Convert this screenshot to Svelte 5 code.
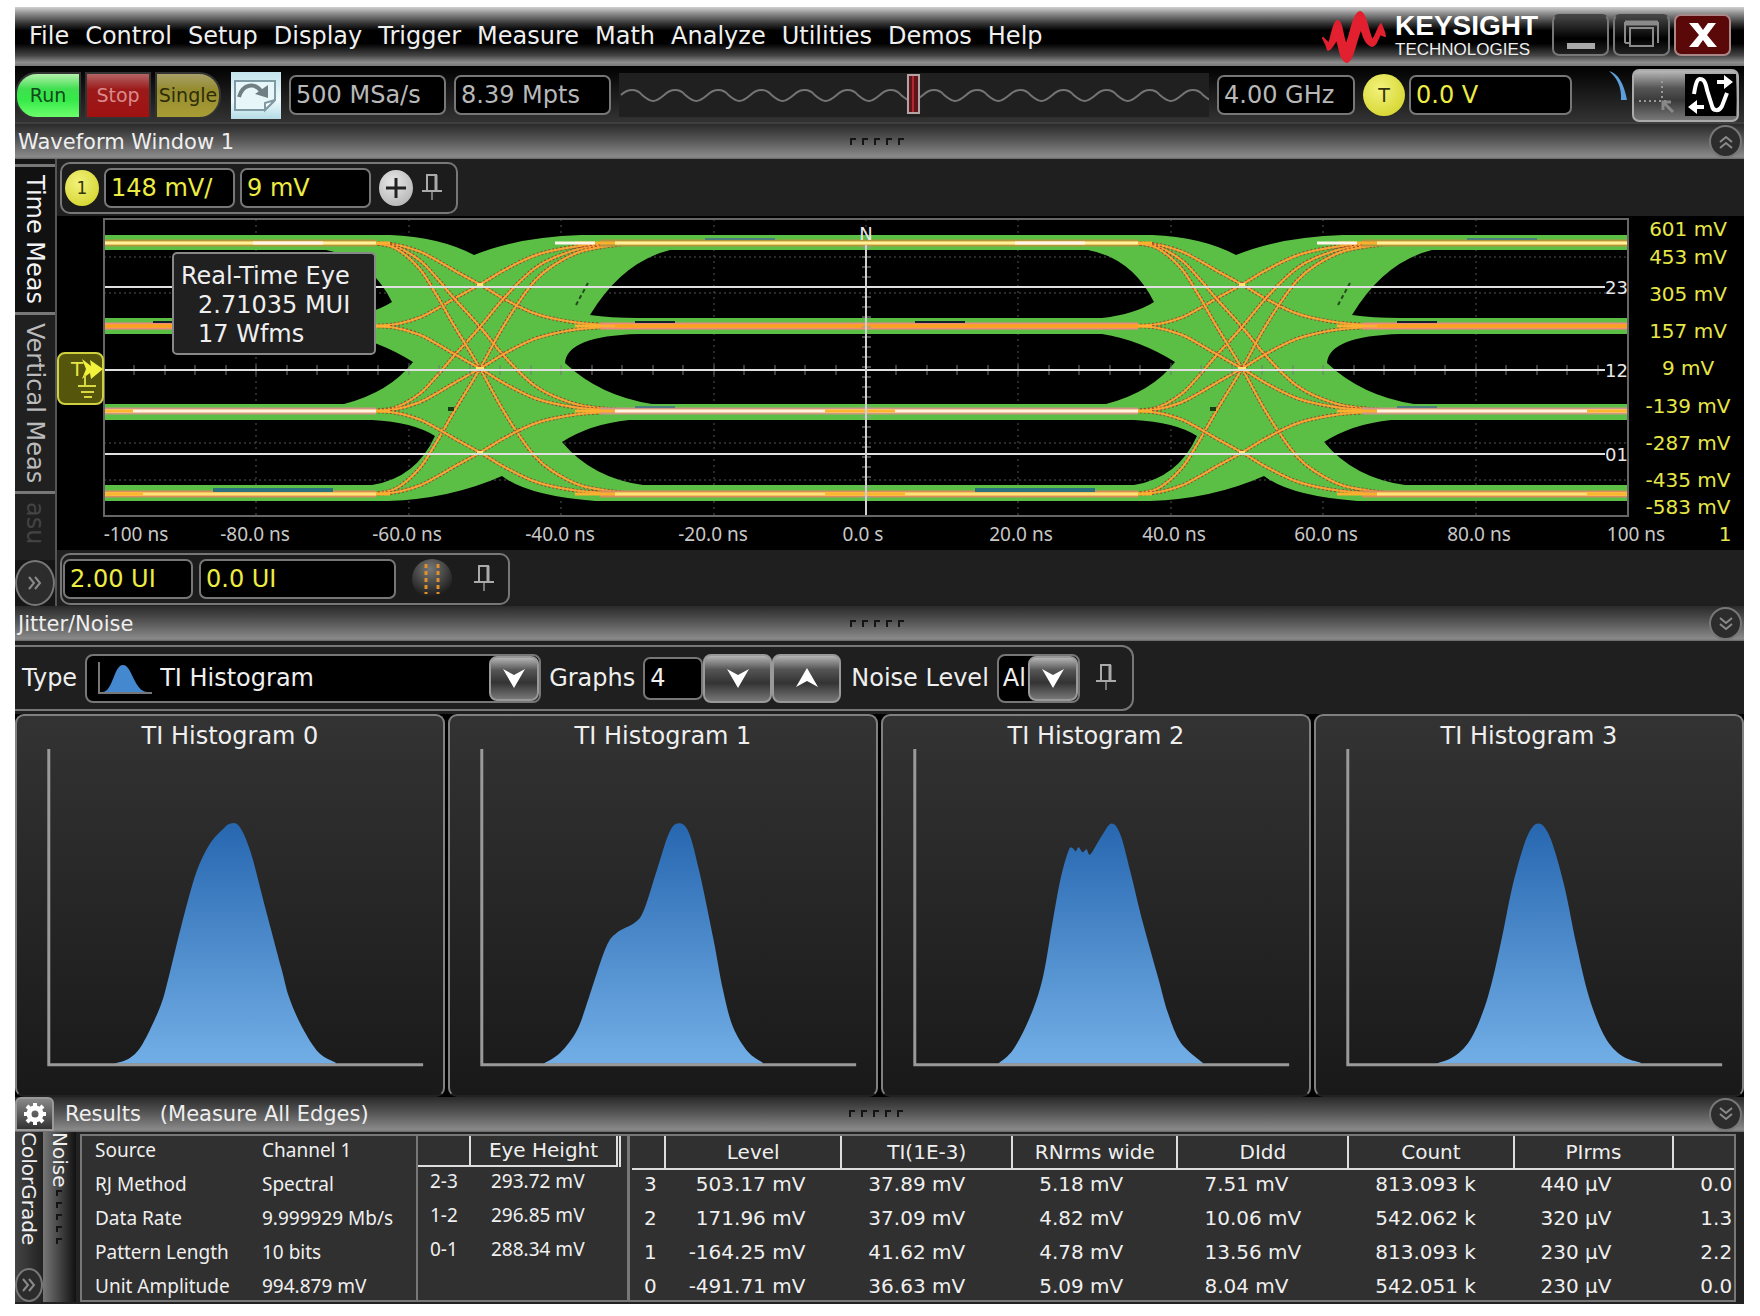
<script lang="ts">
	type Point = [number, number];

	const menus = [
		'File',
		'Control',
		'Setup',
		'Display',
		'Trigger',
		'Measure',
		'Math',
		'Analyze',
		'Utilities',
		'Demos',
		'Help'
	];

	let sampleRate = $state('500 MSa/s');
	let memoryDepth = $state('8.39 Mpts');
	let bandwidth = $state('4.00 GHz');
	let triggerLevel = $state('0.0 V');
	let scale = $state('148 mV/');
	let offset = $state('9 mV');
	let timeScale = $state('2.00 UI');
	let timePosition = $state('0.0 UI');
	let graphType = $state('TI Histogram');
	let graphs = $state('4');
	let noiseLevel = $state('All');

	// eye diagram
	const plotWidth = 1524;
	const plotHeight = 297;
	const period = 762;
	const crossings = [376 - period, 376, 376 + period, 376 + 2 * period];
	const levels = [24, 107, 192, 275];
	// level changes that occur in the pattern, as indexes into levels
	const steps = [
		[0, 1],
		[0, 2],
		[0, 3],
		[1, 2],
		[2, 3]
	];
	const thresholds = [
		{ y: 68, label: '23' },
		{ y: 151, label: '12' },
		{ y: 235, label: '01' }
	];
	const voltages = [
		{ y: 17, label: '601 mV' },
		{ y: 45, label: '453 mV' },
		{ y: 82, label: '305 mV' },
		{ y: 119, label: '157 mV' },
		{ y: 156, label: '9 mV' },
		{ y: 194, label: '-139 mV' },
		{ y: 231, label: '-287 mV' },
		{ y: 268, label: '-435 mV' },
		{ y: 295, label: '-583 mV' }
	];
	const times = [
		{ x: 32, label: '-100 ns' },
		{ x: 151, label: '-80.0 ns' },
		{ x: 303, label: '-60.0 ns' },
		{ x: 456, label: '-40.0 ns' },
		{ x: 609, label: '-20.0 ns' },
		{ x: 759, label: '0.0 s' },
		{ x: 917, label: '20.0 ns' },
		{ x: 1070, label: '40.0 ns' },
		{ x: 1222, label: '60.0 ns' },
		{ x: 1375, label: '80.0 ns' },
		{ x: 1532, label: '100 ns' }
	];
	const gridX = Array.from({ length: 9 }, (_, i) => Math.round(((i + 1) * plotWidth) / 10));
	const gridY = [38, 74, 112, 186, 224, 261];
	const ticksX = Array.from({ length: 49 }, (_, i) => Math.round(((i + 1) * plotWidth) / 50));
	const ticksY = Array.from({ length: 26 }, (_, i) => 28 + i * 10);

	// step response: time from the crossing, share of the step reached
	const response: Point[] = [
		[-110, 0],
		[-85, 0.02],
		[-61, 0.1],
		[-43, 0.21],
		[-25, 0.335],
		[0, 0.5],
		[20, 0.645],
		[38, 0.76],
		[55, 0.85],
		[73, 0.91],
		[100, 0.965],
		[133, 0.99],
		[160, 1]
	];

	function smooth(points: Point[]): string {
		let d = `M${points[0][0]} ${points[0][1]}`;
		for (let i = 0; i < points.length - 1; i++) {
			const a = points[i - 1] ?? points[i];
			const b = points[i];
			const c = points[i + 1];
			const e = points[i + 2] ?? c;
			const c1 = [b[0] + (c[0] - a[0]) / 6, b[1] + (c[1] - a[1]) / 6];
			const c2 = [c[0] - (e[0] - b[0]) / 6, c[1] - (e[1] - b[1]) / 6];
			d += `C${c1.map((n) => n.toFixed(1)).join(' ')} ${c2.map((n) => n.toFixed(1)).join(' ')} ${c[0]} ${c[1]}`;
		}
		return d;
	}

	function transition(cx: number, from: number, to: number): string {
		return smooth(response.map(([t, s]): Point => [cx + t, from + (to - from) * s]));
	}

	const transitions = crossings.flatMap((cx) =>
		steps.flatMap(([a, b]) => [
			transition(cx, levels[a], levels[b]),
			transition(cx, levels[b], levels[a])
		])
	);

	// the green density area is a block with the eye openings cut out
	const openings = [-period, 0, period].map(
		(dx) =>
			`M${486 + dx} 96q32 -53 80 -65h418q44 8 66 52q-19 12 -52 16h-464q-28 0 -48 -3z` +
			`M${461 + dx} 144q2 -27 73 -29h464q38 6 73 28q-23 30 -69 42h-454q-52 -8 -87 -41z` +
			`M${458 + dx} 223q28 -18 67 -22h505q41 2 63 16q-19 42 -63 49h-491q-51 -7 -81 -43z` +
			`M${1048 + dx} 16q50 2 84 20q44 -18 107 -20z` +
			`M${1046 + dx} 282q62 -2 114 -25q26 20 93 25z`
	);
	const density = `M0 16H${plotWidth}V282H0Z` + openings.join('');

	const runs = crossings.map((cx) => ({ start: cx + 135, end: cx + period - 104 }));
	const hot = [
		{ edge: '#b0963c', core: '#fff29a' },
		{ edge: '#f0887c', core: '#fba21c' },
		{ edge: '#d0948a', core: '#fff4e2' },
		{ edge: '#d98c5c', core: '#ffe27a' }
	];

	const histograms: { title: string; points: Point[] }[] = [
		{
			title: 'TI Histogram 0',
			points: [
				[66, 0], [82, 6], [95, 21], [112, 57], [120, 84], [133, 137], [148, 191], [162, 221], [175, 236],
				[183, 242], [192, 239], [203, 214], [217, 161], [234, 97], [242, 67], [255, 37], [272, 11], [289, 1]
			]
		},
		{
			title: 'TI Histogram 1',
			points: [
				[62, 0], [79, 11], [96, 34], [108, 67], [125, 117], [136, 132], [154, 142], [163, 154], [176, 194],
				[188, 231], [197, 242], [208, 234], [219, 194], [233, 127], [243, 74], [253, 37], [268, 12], [283, 1]
			]
		},
		{
			title: 'TI Histogram 2',
			points: [
				[84, 0], [99, 14], [116, 47], [129, 87], [139, 144], [147, 187], [155, 215], [159, 217], [162, 214],
				[165, 218], [169, 213], [173, 216], [177, 211], [188, 229], [198, 242], [207, 231], [217, 194],
				[230, 141], [245, 87], [255, 51], [268, 21], [290, 1]
			]
		},
		{
			title: 'TI Histogram 3',
			points: [
				[89, 0], [108, 8], [125, 27], [141, 67], [154, 121], [165, 175], [177, 219], [185, 237], [192, 242],
				[199, 237], [207, 219], [219, 175], [230, 121], [243, 67], [259, 27], [276, 8], [295, 1]
			]
		}
	];

	function histogramPath(points: Point[]): string {
		return smooth(points.map(([x, y]): Point => [x + 32, 318 - y])) + 'V318Z';
	}

	const info = [
		['Source', 'Channel 1'],
		['RJ Method', 'Spectral'],
		['Data Rate', '9.999929 Mb/s'],
		['Pattern Length', '10 bits'],
		['Unit Amplitude', '994.879 mV']
	];
	const eyeHeights = [
		['2-3', '293.72 mV'],
		['1-2', '296.85 mV'],
		['0-1', '288.34 mV']
	];
	const columns = ['', 'Level', 'TI(1E-3)', 'RNrms wide', 'DIdd', 'Count', 'PIrms', ''];
	const rows = [
		['3', '503.17 mV', '37.89 mV', '5.18 mV', '7.51 mV', '813.093 k', '440 µV', '0.0'],
		['2', '171.96 mV', '37.09 mV', '4.82 mV', '10.06 mV', '542.062 k', '320 µV', '1.3'],
		['1', '-164.25 mV', '41.62 mV', '4.78 mV', '13.56 mV', '813.093 k', '230 µV', '2.2'],
		['0', '-491.71 mV', '36.63 mV', '5.09 mV', '8.04 mV', '542.051 k', '230 µV', '0.0']
	];

	const sine = 'M2 22' + 'q5 -5 11 -5t10 5q7 6 11 6t11 -6'.repeat(14);
</script>

{#snippet grip()}
	<svg class="grip" width="60" height="8" viewBox="0 0 60 8" aria-hidden="true">
		{#each [0, 12, 24, 36, 48] as x}
			<path d="M{x + 1} 7V1H{x + 6}" fill="none" stroke="#141414" stroke-width="2" />
		{/each}
	</svg>
{/snippet}

{#snippet pin()}
	<button class="plain" aria-label="Pin">
		<svg width="20" height="30" viewBox="0 0 20 30" fill="none" stroke="#aaa" stroke-width="2">
			<path d="M5 17V2H14V17M0 18H20" />
			<path d="M14 2V17" stroke-width="3" />
			<path d="M10 19V27" stroke="#777" />
		</svg>
	</button>
{/snippet}

{#snippet chevrons(direction: string)}
	<button class="round" aria-label="{direction} panel">
		<svg width="16" height="16" viewBox="0 0 16 16" fill="none" stroke="#8a8a8a" stroke-width="2">
			{#if direction === 'Collapse'}
				<path d="M2 8L8 3L14 8M2 14L8 9L14 14" />
			{:else if direction === 'Expand'}
				<path d="M2 2L8 7L14 2M2 8L8 13L14 8" />
			{:else}
				<path d="M2 2L7 8L2 14M8 2L13 8L8 14" />
			{/if}
		</svg>
	</button>
{/snippet}

{#snippet arrow(up: boolean)}
	<svg width="24" height="22" viewBox="0 0 24 22" aria-hidden="true">
		<path d={up ? 'M12 1L23 20L12 14L1 20Z' : 'M12 21L1 2L12 8L23 2Z'} fill="#fff" />
	</svg>
{/snippet}

<main>
	<header class="menubar">
		<nav>
			{#each menus as menu}
				<button class="plain">{menu}</button>
			{/each}
		</nav>
		<div class="brand">
			<svg width="64" height="54" viewBox="0 0 64 54" aria-hidden="true">
				<path
					d="M1 29L7 35C10 26 11 15 15 12C20 11 20 27 24 36C28 30 31 4 38 3C44 4 46 24 50 31C54 29 55 20 59 15L62 23L63 27L58 25C55 32 53 37 50 37C44 35 42 29 39 19C34 30 31 51 25 53C18 51 18 39 15 31C13 31 10 40 6 41L4 35Z"
					fill="#e3202f"
					stroke="#e3202f"
					stroke-width="2"
					stroke-linejoin="round"
				/>
			</svg>
			<div>
				<strong>KEYSIGHT</strong>
				<span>TECHNOLOGIES</span>
			</div>
		</div>
		<div class="window-buttons">
			<button aria-label="Minimize">
				<svg width="34" height="34" viewBox="0 0 34 34"><path d="M3 25H31V31H3Z" fill="#aaa" /></svg>
			</button>
			<button aria-label="Restore">
				<svg width="36" height="34" viewBox="0 0 36 34" fill="none" stroke="#8a8a8a">
					<path d="M1 25V5H34V25M1 25H6" stroke-width="2" />
					<path d="M1 5H34" stroke-width="5" />
					<path d="M6 10H29V28H6Z" stroke-width="2" />
				</svg>
			</button>
			<button class="close" aria-label="Close">
				<svg width="30" height="30" viewBox="0 0 30 30">
					<path d="M1 3H10L15 10L20 3H28L19 15L29 27H20L15 20L10 27H1L11 15Z" fill="#fff" />
				</svg>
			</button>
		</div>
	</header>

	<div class="toolbar">
		<div class="acquire">
			<button class="run">Run</button>
			<button class="stop">Stop</button>
			<button class="single">Single</button>
		</div>
		<button class="auto" aria-label="Clear display">
			<svg width="50" height="46" viewBox="0 0 50 46">
				<path d="M4 9H44V28L34 38H4Z" fill="#e6f6f9" stroke="#7f9aa2" stroke-width="2" />
				<path d="M44 28L34 38V31Z" fill="#fff" stroke="#7f9aa2" stroke-width="2" />
				<path d="M8 25C12 11 24 11 30 19" fill="none" stroke="#6f7f84" stroke-width="4" />
				<path d="M24 22L37 26L37 13Z" fill="#6f7f84" />
			</svg>
		</button>
		<input class="field grey rate" aria-label="Sample rate" bind:value={sampleRate} />
		<input class="field grey rate" aria-label="Memory depth" bind:value={memoryDepth} />
		<div class="overview">
			<svg viewBox="0 0 588 44" preserveAspectRatio="none">
				<path d={sine} fill="none" stroke="#747474" stroke-width="2" />
				<rect x="288" y="2" width="11" height="38" fill="#5e1418" stroke="#b4a4a4" stroke-width="2" />
				<path d="M293 3V39" stroke="#b02830" stroke-width="2" />
			</svg>
		</div>
		<input class="field grey bandwidth" aria-label="Bandwidth" bind:value={bandwidth} />
		<button class="badge trigger" aria-label="Trigger source">T</button>
		<input class="field level" aria-label="Trigger level" bind:value={triggerLevel} />
		<div class="edge">
			<svg width="20" height="32" viewBox="0 0 20 32" aria-hidden="true">
				<path d="M1 1C10 3 16 14 19 30L13 30C14 16 8 7 1 1Z" fill="#5d9fd8" />
			</svg>
		</div>
		<button class="mode" aria-label="Waveform mode">
			<svg width="102" height="50" viewBox="0 0 102 50" fill="none">
				<path d="M4 31H34M27 6V30" stroke="#999" stroke-width="2" stroke-dasharray="2 3" />
				<path d="M28 32L38 42M28 40V32H36" stroke="#888" stroke-width="3" />
				<rect x="50" y="4" width="51" height="42" fill="#000" />
				<path d="M59 24C61 11 63 9 65 9S70 9 72 20L77 36C78 41 84 42 87 36L92 23" stroke="#fff" stroke-width="4" />
				<path d="M82 12H94M56 37H69" stroke="#fff" stroke-width="4" />
				<path d="M89 5L98 12L89 19ZM62 30L53 37L62 44Z" fill="#fff" />
			</svg>
		</button>
	</div>

	<div class="titlebar">
		<h2>Waveform Window 1</h2>
		{@render grip()}
		{@render chevrons('Collapse')}
	</div>

	<section class="waveform">
		<div class="side-tabs">
			<button class="tab active">Time Meas</button>
			<button class="tab">Vertical Meas</button>
			<button class="tab faded">asu</button>
			{@render chevrons('More')}
		</div>
		<div class="wave-main">
			<div class="group">
				<button class="badge" aria-label="Channel 1">1</button>
				<input class="field scale" aria-label="Vertical scale" bind:value={scale} />
				<input class="field scale" aria-label="Offset" bind:value={offset} />
				<button class="badge add" aria-label="Add channel">
					<svg width="22" height="22" viewBox="0 0 22 22"><path d="M11 1V21M1 11H21" stroke="#222" stroke-width="3" /></svg>
				</button>
				{@render pin()}
			</div>

			<div class="plot">
				<svg viewBox="-47 -3 1687 334" role="img" aria-label="Real-time eye diagram">
					<defs>
						<clipPath id="plot-area"><rect width={plotWidth} height={plotHeight} /></clipPath>
					</defs>
					<g clip-path="url(#plot-area)">
						{#each gridX as x}
							<path d="M{x} 0V{plotHeight}" stroke="#555" stroke-dasharray="2 4" />
						{/each}
						{#each gridY as y}
							<path d="M0 {y}H{plotWidth}" stroke="#555" stroke-dasharray="2 3" />
						{/each}
						<path d={density} fill="#5cbf45" fill-rule="evenodd" />
						{#each transitions as d}
							<path {d} fill="none" stroke="#a0442c" stroke-width="4" stroke-dasharray="2 2" />
							<path {d} fill="none" stroke="#fba436" stroke-width="2" />
						{/each}
						{#each runs as run}
							{#each levels as y, i}
								<path d="M{run.start - 15} {y}H{run.end}" stroke={hot[i].edge} stroke-width="7" />
								<path d="M{run.start - 40} {y}H{run.end + 14}" stroke="#fbb030" stroke-width="3" />
								<path d="M{run.start} {y}H{run.end}" stroke={hot[i].core} stroke-width="3" />
							{/each}
							<path d="M{run.start + 90} 20H{run.start + 160}M{run.start + 20} 188H{run.start + 60}" stroke="#4b7f80" stroke-width="2" />
							<path d="M{run.start + 20} 103H{run.start + 60}M{run.start + 300} 103H{run.start + 350}" stroke="#14202c" stroke-width="2" />
							<path d="M{run.start + 360} 271H{run.start + 480}" stroke="#2c7380" stroke-width="4" />
							<path d="M{run.start + 210} 192H{run.start + 280}M{run.start + 210} 275H{run.start + 290}" stroke="#fcb52c" stroke-width="3" />
							<path d="M{run.start + 400} 24H{run.start + 470}M{run.start - 60} 24H{run.start - 20}" stroke="#fff6ec" stroke-width="3" />
						{/each}
						{#each crossings as cx}
							<path d="M{cx - 3} 66h6M{cx - 4} 150h8M{cx - 3} 234h6" stroke="#ffe070" stroke-width="4" />
							<path d="M{cx + 108} 64L{cx + 96} 86" stroke="#234a1c" stroke-width="2" stroke-dasharray="4 3" />
							<path d="M{cx - 32} 190h6" stroke="#183c12" stroke-width="4" />
						{/each}
						{#each ticksX as x}
							<path d="M{x} 146V156" stroke="#777" />
						{/each}
						{#each ticksY as y}
							<path d="M758 {y}H767" stroke="#999" />
						{/each}
						{#each thresholds as line}
							<path d="M0 {line.y}H1501" stroke="#e0e0e0" stroke-width="2" />
						{/each}
						<path d="M762 26V{plotHeight}" stroke="#d0d0d0" stroke-width="2" />
					</g>
					<rect width={plotWidth} height={plotHeight} fill="none" stroke="#666" stroke-width="2" />
					<text class="mark" x="762" y="21" text-anchor="middle">N</text>
					{#each thresholds as line}
						<text class="mark" x={plotWidth} y={line.y + 7} text-anchor="end">{line.label}</text>
					{/each}
					{#each voltages as v}
						<text class="volts" x="1584" y={v.y} text-anchor="middle">{v.label}</text>
					{/each}
					{#each times as t}
						<text class="time" x={t.x} y="322" text-anchor="middle">{t.label}</text>
					{/each}
					<text class="volts" x="1621" y="322" text-anchor="middle">1</text>
					<rect x="-46" y="134" width="45" height="51" rx="7" fill="#55550c" stroke="#cfd040" stroke-width="2" />
					<text class="volts" x="-33" y="157">T</text>
					<path d="M-22 140L-13 147L-14 141L-1 150L-13 160L-14 154L-22 160L-18 150Z" fill="#f2f23c" />
					<path d="M-19 156V167M-26 167H-8M-23 173H-10M-20 178H-12" stroke="#d8d840" stroke-width="2" />
				</svg>
				<div class="eye-info">
					<p>Real-Time Eye</p>
					<p class="indent">2.71035 MUI</p>
					<p class="indent">17 Wfms</p>
				</div>
			</div>

			<div class="group horizontal">
				<input class="field time-scale" aria-label="Time scale" bind:value={timeScale} />
				<input class="field position" aria-label="Horizontal position" bind:value={timePosition} />
				<button class="badge zoom" aria-label="Zoom">
					<svg width="20" height="32" viewBox="0 0 20 32"><path d="M4 1V31M16 1V31" stroke="#e0902c" stroke-width="3" stroke-dasharray="4 3" /></svg>
				</button>
				{@render pin()}
			</div>
		</div>
	</section>

	<div class="titlebar">
		<h2>Jitter/Noise</h2>
		{@render grip()}
		{@render chevrons('Expand')}
	</div>

	<div class="controls">
		<label for="type">Type</label>
		<div class="combo type">
			<svg width="56" height="34" viewBox="0 0 56 34" aria-hidden="true">
				<path d="M6 31C16 30 17 4 26 4S37 30 50 31Z" fill="#4488d0" />
				<path d="M2 1V32H55" fill="none" stroke="#777" stroke-width="2" />
			</svg>
			<select id="type" bind:value={graphType}>
				<option>TI Histogram</option>
			</select>
			<span class="drop">{@render arrow(false)}</span>
		</div>
		<label for="graphs">Graphs</label>
		<div class="stepper">
			<input id="graphs" class="field" bind:value={graphs} />
			<button class="drop" aria-label="Fewer graphs">{@render arrow(false)}</button>
			<button class="drop" aria-label="More graphs">{@render arrow(true)}</button>
		</div>
		<label for="noise">Noise Level</label>
		<div class="combo noise">
			<select id="noise" bind:value={noiseLevel}>
				<option>All</option>
			</select>
			<span class="drop">{@render arrow(false)}</span>
		</div>
		{@render pin()}
	</div>

	<section class="histograms">
		{#each histograms as histogram}
			<article>
				<h3>{histogram.title}</h3>
				<svg viewBox="0 0 429 349" role="img" aria-label={histogram.title}>
					<defs>
						<linearGradient id="fill" x1="0" y1="76" x2="0" y2="318" gradientUnits="userSpaceOnUse">
							<stop offset="0" stop-color="#2767b0" />
							<stop offset="1" stop-color="#72aee6" />
						</linearGradient>
					</defs>
					<path d={histogramPath(histogram.points)} fill="url(#fill)" />
					<path d="M32 1V319H409" fill="none" stroke="#9a9a9a" stroke-width="3" />
				</svg>
			</article>
		{/each}
	</section>

	<div class="titlebar results-bar">
		<div class="results-title">
			<button class="gear" aria-label="Settings">
				<svg width="24" height="24" viewBox="0 0 24 24">
					<circle cx="12" cy="12" r="6" fill="none" stroke="#fff" stroke-width="5" />
					<path
						d="M12 1V6M12 18V23M1 12H6M18 12H23M4 4L8 8M16 16L20 20M20 4L16 8M8 16L4 20"
						stroke="#fff"
						stroke-width="4"
					/>
				</svg>
			</button>
			<h2>Results</h2>
			<h2>(Measure All Edges)</h2>
		</div>
		{@render grip()}
		{@render chevrons('Expand')}
	</div>

	<section class="results">
		<div class="result-tab">
			<button class="plain">ColorGrade</button>
			{@render chevrons('More')}
		</div>
		<div class="result-tab noise-tab">
			<button class="plain">Noise</button>
			<svg width="8" height="60" viewBox="0 0 8 60" aria-hidden="true">
				{#each [0, 12, 24, 36, 48] as y}
					<path d="M1 {y + 6}V{y + 1}H6" fill="none" stroke="#141414" stroke-width="2" />
				{/each}
			</svg>
		</div>
		<div class="tables">
			<table class="info">
				<tbody>
					{#each info as [name, value]}
						<tr><th scope="row">{name}</th><td>{value}</td></tr>
					{/each}
				</tbody>
			</table>
			<div class="eye-heights">
				<table>
					<thead>
						<tr><th></th><th>Eye Height</th></tr>
					</thead>
					<tbody>
						{#each eyeHeights as [name, value]}
							<tr><td>{name}</td><td>{value}</td></tr>
						{/each}
					</tbody>
				</table>
			</div>
			<div class="measurements">
				<table>
					<colgroup>
						<col class="c-row" /><col class="c-level" /><col class="c-ti" /><col class="c-rn" />
						<col class="c-ti" /><col class="c-rn" /><col class="c-pi" /><col />
					</colgroup>
					<thead>
						<tr>
							{#each columns as column}<th>{column}</th>{/each}
						</tr>
					</thead>
					<tbody>
						{#each rows as row}
							<tr>
								{#each row as cell}<td>{cell}</td>{/each}
							</tr>
						{/each}
					</tbody>
				</table>
			</div>
		</div>
	</section>
</main>

<style>
	:global(body) {
		margin: 0;
		background: #fff;
	}

	main {
		margin: 7px 16px 11px 15px;
		background: #1f1f1f;
		color: #efefef;
		font-family: 'DejaVu Sans', Verdana, sans-serif;
		font-size: 20px;
		overflow: hidden;
	}

	main :global(*) {
		box-sizing: border-box;
	}

	button,
	input,
	select {
		font-family: inherit;
		color: inherit;
		margin: 0;
		padding: 0;
	}

	button {
		display: flex;
		align-items: center;
		justify-content: center;
		cursor: pointer;
	}

	h2,
	h3,
	p {
		margin: 0;
		font-weight: 400;
		white-space: nowrap;
	}

	h2 {
		font-size: 21px;
		line-height: 24px;
	}

	.plain {
		border: 0;
		background: none;
		flex: none;
	}

	.menubar {
		display: flex;
		align-items: center;
		height: 59px;
		background: linear-gradient(#d0d0d0, #888 12%, #333 28%, #000 40%, #000 62%, #444 82%, #8c8c8c 94%, #777);
	}

	.menubar nav {
		display: flex;
		flex: 1;
		gap: 16px;
		padding: 0 0 2px 14px;
	}

	.menubar .plain {
		font-size: 24px;
		line-height: 28px;
	}

	.brand {
		display: flex;
		align-items: center;
		gap: 9px;
		padding-bottom: 2px;
		font-family: 'Liberation Sans', Arial, sans-serif;
	}

	.brand div {
		display: flex;
		flex-direction: column;
		width: 157px;
	}

	.brand strong {
		font-size: 28px;
		line-height: 28px;
		color: #fff;
	}

	.brand span {
		font-size: 17px;
		line-height: 20px;
	}

	.window-buttons {
		display: flex;
		gap: 4px;
		padding: 0 13px 4px 0;
	}

	.window-buttons button {
		width: 57px;
		height: 42px;
		border: 2px solid #777;
		border-top-color: #444;
		border-radius: 7px;
		background: linear-gradient(#444, #000 60%, #222);
	}

	.window-buttons .close {
		border-color: #a88;
		background: #5a0808;
	}

	.toolbar {
		display: flex;
		align-items: center;
		gap: 8px;
		height: 58px;
		padding: 2px 5px 0 0;
		background: linear-gradient(#000, #161616 40%, #333);
		border-bottom: 2px solid #3e3e3e;
	}

	.acquire {
		display: flex;
		gap: 4px;
		margin-right: 2px;
	}

	.acquire button {
		width: 66px;
		height: 47px;
		border: 2px solid #333;
		font-size: 19px;
	}

	.run {
		border-radius: 22px 0 0 22px;
		color: #12481a;
		background: linear-gradient(#b4f0ac, #3fe050 35%, #35ea48 60%, #6cff6c);
	}

	.acquire .stop {
		color: #d98c8c;
		background: linear-gradient(#b46464, #9c1a1a 36%, #a01212);
	}

	.acquire .single {
		border-radius: 0 22px 22px 0;
		color: #2e2c08;
		background: linear-gradient(#a8a068, #958c30 36%, #a89c34);
	}

	.auto {
		width: 50px;
		height: 47px;
		border: 0;
		background: linear-gradient(#c4e4ec, #eefafc 60%, #b4dce6);
	}

	.field {
		min-width: 0;
		height: 40px;
		padding: 0 0 0 5px;
		border: 2px solid #777;
		border-radius: 7px;
		background: #000;
		color: #ecec44;
		font-size: 24px;
	}

	.grey {
		color: #b8b8b8;
	}

	.rate {
		width: 157px;
	}

	.overview {
		flex: 1;
		height: 44px;
		background: #202020;
	}

	.overview svg {
		display: block;
		width: 100%;
		height: 100%;
	}

	.bandwidth {
		width: 138px;
	}

	.badge {
		flex: none;
		width: 34px;
		height: 36px;
		border: 0;
		border-radius: 50%;
		background: radial-gradient(circle at 40% 35%, #f2f27c, #d6d632 80%);
		color: #33330c;
		font-size: 17px;
	}

	.trigger {
		width: 42px;
		height: 42px;
		font-size: 19px;
	}

	.level {
		width: 163px;
		margin-left: -4px;
	}

	.edge {
		display: flex;
		justify-content: flex-end;
		align-items: flex-start;
		width: 48px;
		height: 50px;
	}

	.mode {
		width: 107px;
		height: 53px;
		border: 2px solid #aaa;
		border-radius: 7px;
		background: linear-gradient(#b8b8b8, #555 35%, #3a3a3a 60%, #777);
		margin-left: -4px;
	}

	.titlebar {
		display: grid;
		grid-template-columns: 1fr auto 1fr;
		align-items: center;
		height: 35px;
		padding: 0 2px 0 3px;
		background: linear-gradient(#2a2a2a, #555 45%, #8a8a8a 94%, #666);
	}

	.round {
		justify-self: end;
		flex: none;
		width: 33px;
		height: 33px;
		border: 2px solid #777;
		border-radius: 50%;
		background: #2c2c2c;
	}

	.waveform {
		display: flex;
	}

	.side-tabs {
		display: flex;
		flex-direction: column;
		width: 42px;
		padding-top: 5px;
		background: #161616;
		border-right: 2px solid #555;
	}

	.side-tabs :global(.round) {
		width: 40px;
		height: 46px;
	}

	.tab {
		justify-content: flex-start;
		padding: 8px 0;
		border: 0;
		border-top: 3px solid #777;
		background: #202020;
		color: #bbb;
		font-size: 24px;
		line-height: 40px;
		writing-mode: vertical-rl;
	}

	.active {
		color: #f4f4f4;
		background: #111;
	}

	.faded {
		flex: 1;
		color: #444;
	}

	.wave-main {
		flex: 1;
		min-width: 0;
	}

	.group {
		display: flex;
		align-items: center;
		gap: 5px;
		width: 398px;
		height: 52px;
		margin: 3px 0 2px 3px;
		padding: 0 3px;
		border: 2px solid #777;
		border-radius: 10px;
		background: #1c1c1c;
	}

	.scale {
		width: 131px;
	}

	.add {
		background: radial-gradient(circle at 40% 35%, #e8e8e8, #aaa);
		margin: 0 4px 0 3px;
	}

	.horizontal {
		width: 450px;
		margin-bottom: 1px;
		padding: 0 1px;
		gap: 6px;
	}

	.time-scale {
		width: 130px;
	}

	.position {
		width: 197px;
	}

	.zoom {
		width: 40px;
		height: 40px;
		margin: 0 16px 0 10px;
		background: radial-gradient(circle at 45% 25%, #777, #1c1c1c 75%);
	}

	.plot {
		position: relative;
		background: #000;
	}

	.plot svg {
		display: block;
		width: 100%;
		height: auto;
	}

	.plot text {
		font-size: 20px;
	}

	.plot .volts {
		fill: #e6e648;
	}

	.plot .mark {
		font-size: 18px;
		fill: #e8e8e8;
	}

	.plot .time {
		font-family: 'Noto Sans', sans-serif;
		font-size: 19px;
		fill: #c8c8c8;
	}

	.eye-info {
		position: absolute;
		left: 115px;
		top: 36px;
		padding: 8px 24px 4px 7px;
		border: 2px solid #888;
		border-radius: 5px;
		background: #202020;
		font-size: 24px;
		line-height: 29px;
	}

	.indent {
		padding-left: 17px;
	}

	.controls {
		display: flex;
		align-items: center;
		gap: 8px;
		width: fit-content;
		height: 66px;
		margin: 4px 0 3px;
		padding: 0 16px 0 7px;
		border: 2px solid #777;
		border-left: 0;
		border-radius: 0 12px 12px 0;
		font-size: 24px;
	}

	.combo {
		display: flex;
		align-items: center;
		height: 49px;
		border: 2px solid #777;
		border-radius: 8px;
		background: #000;
	}

	.combo select {
		appearance: none;
		flex: 1;
		min-width: 0;
		height: 44px;
		border: 0;
		background: none;
		color: #efefef;
		font-size: 24px;
		text-overflow: clip;
		overflow: hidden;
	}

	.type {
		width: 456px;
		padding-left: 10px;
		gap: 7px;
	}

	.noise {
		width: 83px;
		padding-left: 4px;
		margin-right: 8px;
	}

	.drop {
		display: flex;
		flex: none;
		align-items: center;
		justify-content: center;
		width: 50px;
		height: 45px;
		border: 2px solid #999;
		border-radius: 8px;
		background: linear-gradient(#b4b4b4, #555 30%, #333 60%, #777);
		pointer-events: none;
	}

	.stepper {
		display: flex;
		align-items: center;
		margin-right: 2px;
	}

	.stepper .field {
		width: 60px;
		color: #efefef;
		height: 43px;
	}

	.stepper .drop {
		width: 69px;
		height: 49px;
		pointer-events: auto;
	}

	.histograms {
		display: grid;
		grid-template-columns: repeat(4, 1fr);
		gap: 3px;
		background: #000;
	}

	article {
		border: 2px solid #808080;
		border-bottom-color: #222;
		border-radius: 9px;
		background: linear-gradient(#333, #191919);
		text-align: center;
	}

	h3 {
		padding-top: 8px;
		font-size: 24px;
		line-height: 24px;
	}

	article svg {
		display: block;
		width: 100%;
		height: auto;
	}

	.results-bar {
		padding-left: 0;
	}

	.results-title {
		display: flex;
		align-items: center;
		gap: 11px;
	}

	.results-title h2 + h2 {
		margin-left: 8px;
	}

	.gear {
		width: 39px;
		height: 34px;
		border: 2px solid #999;
		border-radius: 6px 6px 0 0;
		background: linear-gradient(#888, #333);
	}

	.results {
		display: flex;
		padding-bottom: 2px;
		background: #222;
	}

	.result-tab {
		display: flex;
		flex: none;
		flex-direction: column;
		justify-content: space-between;
		align-items: center;
		width: 28px;
		background: linear-gradient(90deg, #444, #222);
	}

	.result-tab .plain {
		justify-content: flex-start;
		font-size: 20px;
		line-height: 26px;
		writing-mode: vertical-rl;
	}

	.result-tab :global(.round) {
		width: 28px;
		height: 34px;
	}

	.noise-tab {
		justify-content: flex-start;
		gap: 3px;
		width: 33px;
		background: linear-gradient(90deg, #777, #111);
	}

	.tables {
		display: flex;
		flex: 1;
		min-width: 0;
		margin: 2px 8px 0 4px;
		border: 2px solid #777;
		background: #303030;
	}

	table {
		width: 100%;
		border-collapse: collapse;
		table-layout: fixed;
	}

	th,
	td {
		padding: 0 0 6px;
		font-weight: 400;
		line-height: 28px;
		text-align: left;
		white-space: nowrap;
	}

	tbody tr:last-child > * {
		padding-bottom: 0;
	}

	.info {
		flex: none;
		align-self: flex-start;
		width: 334px;
		font-family: 'Noto Sans', sans-serif;
		font-size: 19px;
	}

	.info th {
		width: 180px;
		padding-left: 13px;
	}

	.eye-heights {
		flex: none;
		width: 214px;
		padding-right: 6px;
		border: solid #777;
		border-width: 0 3px 0 2px;
	}

	.eye-heights th {
		height: 30px;
		padding: 0;
		border-bottom: 2px solid #ddd;
		text-align: center;
	}

	.eye-heights th:first-child {
		width: 52px;
		border-right: 2px solid #ddd;
	}

	.eye-heights th:last-child {
		border-right: 5px double #ddd;
	}

	.eye-heights td {
		padding-left: 12px;
		font-family: 'Noto Sans', sans-serif;
		font-size: 19px;
	}

	.eye-heights td + td {
		padding-left: 21px;
	}

	.measurements {
		flex: 1;
		min-width: 0;
		padding-left: 2px;
		overflow: hidden;
	}

	.measurements th {
		height: 33px;
		padding: 0;
		border: solid #ddd;
		border-width: 0 2px 2px 0;
		text-align: center;
	}

	.measurements th:last-child {
		border-right: 0;
	}

	.measurements td {
		padding-left: 27px;
	}

	.measurements td:first-child {
		padding-left: 12px;
	}

	.measurements td:nth-child(2) {
		padding-left: 0;
		padding-right: 36px;
		text-align: right;
	}

	.c-row {
		width: 3%;
	}

	.c-level {
		width: 16%;
	}

	.c-ti {
		width: 15.5%;
	}

	.c-rn {
		width: 15%;
	}

	.c-pi {
		width: 14.5%;
	}
</style>
